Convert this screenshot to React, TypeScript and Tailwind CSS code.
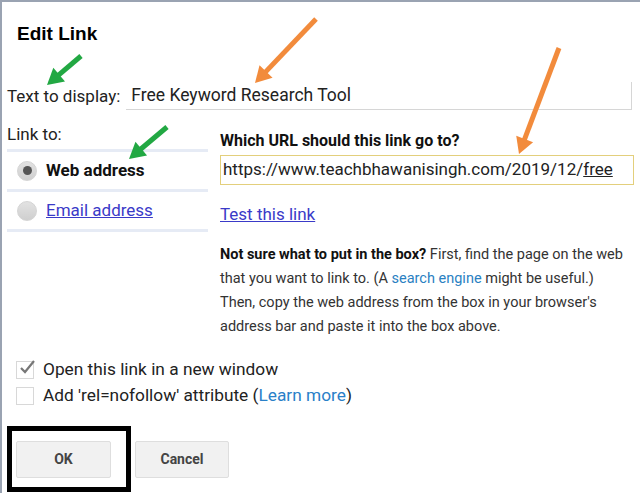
import React from 'react'

function Arrow({ x1, y1, x2, y2, color }: { x1: number; y1: number; x2: number; y2: number; color: string }) {
  const dx = x2 - x1
  const dy = y2 - y1
  const len = Math.sqrt(dx * dx + dy * dy)
  const ux = dx / len
  const uy = dy / len
  const head = 16
  const half = 9
  const bx = x2 - ux * head
  const by = y2 - uy * head
  const p1 = `${bx - uy * half},${by + ux * half}`
  const p2 = `${bx + uy * half},${by - ux * half}`
  return (
    <g>
      <line x1={x1} y1={y1} x2={bx + ux * 2} y2={by + uy * 2} stroke={color} strokeWidth={5} />
      <polygon points={`${x2},${y2} ${p1} ${p2}`} fill={color} />
    </g>
  )
}

function Radio({ checked }: { checked?: boolean }) {
  return (
    <span className="w-[20px] h-[20px] rounded-full bg-gradient-to-b from-[#e2e2e2] to-[#cfcfcf] border border-[#d4d4d4] flex items-center justify-center shrink-0">
      {checked && <span className="w-[9px] h-[9px] rounded-full bg-[#555]" />}
    </span>
  )
}

function Checkbox({ checked }: { checked?: boolean }) {
  return (
    <span className="w-[18px] h-[18px] border border-[#d8d8d8] bg-white flex items-center justify-center shrink-0 relative">
      {checked && (
        <svg width="18" height="18" viewBox="0 0 18 18" className="absolute -top-[3px] left-[1px]">
          <path d="M3 9 L7 13 L16 2" stroke="#777" strokeWidth="2.2" fill="none" />
        </svg>
      )}
    </span>
  )
}

export default function App() {
  return (
    <div
      className="relative w-[640px] h-[493px] bg-white overflow-hidden border-t-[2px] border-l-[2px] border-[#9aa3b2] text-[#222]"
      style={{ fontFamily: 'Roboto, "Liberation Sans", Arial, sans-serif' }}
    >
      <h2 className="ml-[15px] mt-[20px] text-[19px] leading-[24px] font-bold text-black" style={{ fontFamily: '"Liberation Sans", Arial, sans-serif' }}>
        Edit Link
      </h2>

      <div className="flex items-center mt-[36px] ml-[5px]">
        <span className="text-[17px] leading-[28px] text-[#222]">Text to display:</span>
        <div className="ml-[6px] w-[506px] h-[28px] border-b border-r border-[#d6d6d6] flex items-center pl-[5px] text-[17.5px] text-[#222]">
          Free Keyword Research Tool
        </div>
      </div>

      <div className="flex mt-[14px] ml-[5px]">
        <div className="w-[201px]">
          <div className="text-[17px] leading-[20px] text-[#222]">Link to:</div>
          <div className="mt-[5px] border-t-[3px] border-[#e6ebf5]">
            <div className="h-[40px] flex items-center pl-[10px] gap-[9px] border-b-[3px] border-[#e6ebf5]">
              <Radio checked />
              <span className="text-[17px] font-bold text-[#111]">Web address</span>
            </div>
            <div className="h-[40px] flex items-center pl-[10px] gap-[9px] border-b-[3px] border-[#e6ebf5]">
              <Radio />
              <span className="text-[17px] text-[#3a3ac8] underline">Email address</span>
            </div>
          </div>
        </div>

        <div className="ml-[12px] pt-[7px]">
          <div className="text-[16px] leading-[20px] font-bold text-[#111]">Which URL should this link go to?</div>
          <div className="mt-[4px] w-[414px] h-[30px] border border-[#e3cf7c] flex items-center pl-[2px] text-[17px] text-[#222] overflow-hidden whitespace-nowrap">
            https://www.teachbhawanisingh.com/2019/12/<span className="underline">free</span>
          </div>
          <div className="mt-[18px] text-[17px] leading-[22px] text-[#3a3ac8] underline">Test this link</div>
          <p className="mt-[18px] text-[14.5px] leading-[24px] text-[#333] whitespace-nowrap">
            <span className="block">
              <b className="text-[#111]">Not sure what to put in the box?</b> First, find the page on the web
            </span>
            <span className="block">
              that you want to link to. (A <span className="text-[#2a7fc2]">search engine</span> might be useful.)
            </span>
            <span className="block">Then, copy the web address from the box in your browser's</span>
            <span className="block">address bar and paste it into the box above.</span>
          </p>
        </div>
      </div>

      <div className="ml-[14px] mt-[18px] flex flex-col gap-0">
        <div className="flex items-center gap-[9px]">
          <Checkbox checked />
          <span className="text-[17.3px] text-[#222]">Open this link in a new window</span>
        </div>
        <div className="flex items-center gap-[9px]">
          <Checkbox />
          <span className="text-[17.3px] text-[#222]">
            Add 'rel=nofollow' attribute (<span className="text-[#2a80c8]">Learn more</span>)
          </span>
        </div>
      </div>

      <div className="flex items-start ml-[5px] mt-[17px]">
        <div className="border-[5px] border-black pl-[4px] pt-[10px] pr-[15px] pb-[9px]">
          <button className="w-[95px] h-[37px] bg-[#f1f1f1] border border-[#dedede] rounded-[2px] text-[14px] font-bold text-[#444]">
            OK
          </button>
        </div>
        <button className="ml-[4px] mt-[15px] w-[94px] h-[37px] bg-[#f1f1f1] border border-[#dedede] rounded-[2px] text-[14px] font-bold text-[#444]">
          Cancel
        </button>
      </div>

      <svg className="absolute left-0 top-0 pointer-events-none" width="640" height="493">
        <Arrow x1={79} y1={54} x2={45} y2={83} color="#22a843" />
        <Arrow x1={165} y1={125} x2={127} y2={157} color="#22a843" />
        <Arrow x1={314} y1={17} x2={253} y2={81} color="#f28b3c" />
        <Arrow x1={557} y1={46} x2={517} y2={152} color="#f28b3c" />
      </svg>
    </div>
  )
}
